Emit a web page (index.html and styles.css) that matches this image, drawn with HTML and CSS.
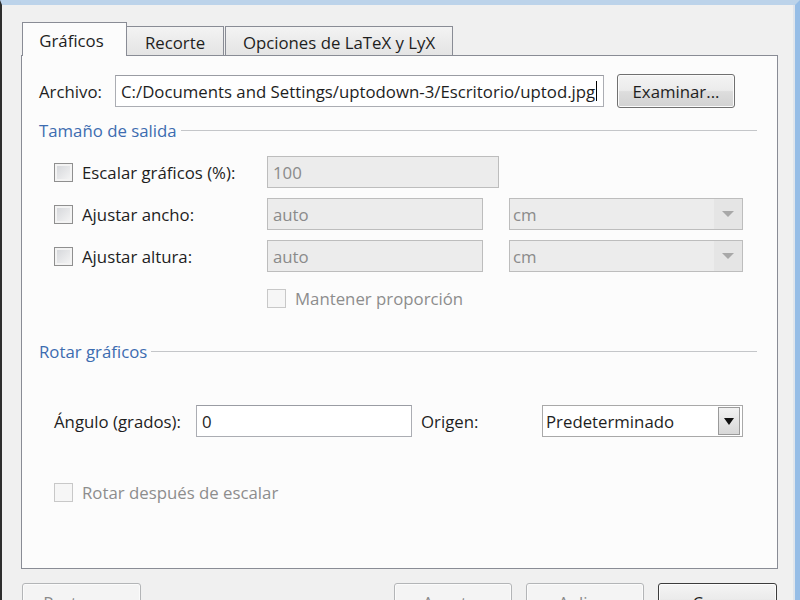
FILE: index.html
```html
<!DOCTYPE html>
<html lang="es">
<head>
  <meta charset="UTF-8">
  <title>Gráficos</title>
  <link rel="stylesheet" href="styles.css">
</head>
<body>
  <div class="window">
    <div class="tabs">
      <div class="tab tab-active">Gráficos</div>
      <div class="tab tab-recorte">Recorte</div>
      <div class="tab tab-opciones">Opciones de LaTeX y LyX</div>
    </div>

    <div class="panel">
      <div class="file-row">
        <span class="file-label">Archivo:</span>
        <div class="field file-field">C:/Documents and Settings/uptodown-3/Escritorio/uptod.jpg<span class="caret"></span></div>
        <button type="button" class="btn btn-browse">Examinar...</button>
      </div>

      <div class="group-title"><span>Tamaño de salida</span></div>
      <div class="size-rows">
        <div class="row">
          <label class="check-label"><span class="check"></span>Escalar gráficos (%):</label>
          <div class="field disabled field-scale">100</div>
        </div>
        <div class="row">
          <label class="check-label"><span class="check"></span>Ajustar ancho:</label>
          <div class="field disabled field-size">auto</div>
          <div class="combo disabled combo-unit">cm<span class="combo-arrow"></span></div>
        </div>
        <div class="row">
          <label class="check-label"><span class="check"></span>Ajustar altura:</label>
          <div class="field disabled field-size">auto</div>
          <div class="combo disabled combo-unit">cm<span class="combo-arrow"></span></div>
        </div>
        <div class="row row-small row-keep">
          <label class="check-label muted"><span class="check check-off"></span>Mantener proporción</label>
        </div>
      </div>

      <div class="group-title group-rotate"><span>Rotar gráficos</span></div>
      <div class="row row-angle">
        <span class="angle-label">Ángulo (grados):</span>
        <div class="field field-angle">0</div>
        <span class="origin-label">Origen:</span>
        <div class="combo combo-origin">Predeterminado<span class="combo-button"></span></div>
      </div>
      <div class="row row-small row-after">
        <label class="check-label muted"><span class="check check-off"></span>Rotar después de escalar</label>
      </div>
    </div>

    <div class="buttons">
      <button type="button" class="btn btn-off">Restaurar</button>
      <span class="spacer"></span>
      <button type="button" class="btn btn-off">Aceptar</button>
      <button type="button" class="btn btn-off">Aplicar</button>
      <button type="button" class="btn btn-default">Cerrar</button>
    </div>
  </div>
</body>
</html>
```

FILE: styles.css
```css
/* Ventana */
body {
  margin: 0;
  font-family: "Open Sans", "Noto Sans", sans-serif;
  font-size: 16.8px;
  color: #1e1e1e;
  background-color: #f0f0f0;
  overflow: hidden;
}
.window {
  box-sizing: border-box;
  width: 800px;
  height: 600px;
  border-top: 5px solid #bcd3ea;
  border-left: 2px solid #2e2e2e;
  border-right: 5px solid #96bde6;
  box-shadow: inset -2px 0 0 #dfe5ec;
  padding: 17px 0 0 19px;
  background-color: #f0f0f0;
}

/* Pestañas */
.tabs {
  display: flex;
  align-items: flex-end;
  height: 34px;
  margin-left: 1px;
  margin-bottom: -1px;
  position: relative;
  z-index: 1;
}
.tab {
  box-sizing: border-box;
  height: 29px;
  margin-bottom: 1px;
  border: 1px solid #898c95;
  border-bottom: none;
  background: linear-gradient(#f3f3f3, #e4e4e4);
  display: flex;
  align-items: center;
  justify-content: center;
  padding-top: 3px;
}
.tab-active {
  width: 105px;
  height: 34px;
  margin-bottom: 0;
  background: #fcfcfc;
  padding-top: 2px;
  padding-right: 6px;
}
.tab-recorte {
  width: 97px;
  border-left: none;
}
.tab-opciones {
  width: 228px;
  margin-left: 1px;
}

/* Panel */
.panel {
  box-sizing: border-box;
  width: 757px;
  height: 514px;
  border: 1px solid #898c95;
  background-color: #fcfcfc;
  padding: 18px 20px 0 17px;
}
.file-row {
  display: flex;
  align-items: center;
  height: 34px;
}
.file-label {
  width: 76px;
}
.field {
  box-sizing: border-box;
  height: 32px;
  border: 1px solid #abadb3;
  border-top-color: #9a9ca3;
  background-color: #fff;
  display: flex;
  align-items: center;
  padding-left: 5px;
  white-space: nowrap;
  overflow: hidden;
}
.file-field {
  width: 489px;
}
.caret {
  display: inline-block;
  width: 1px;
  height: 20px;
  margin-left: 1px;
  background-color: #000;
}
.field.disabled {
  background-color: #ececec;
  border-color: #bdbdbd;
  color: #8a8a8a;
}

/* Botones */
.btn {
  box-sizing: border-box;
  height: 34px;
  border: 1px solid #707070;
  border-radius: 3px;
  background: linear-gradient(#f4f4f4 0%, #ebebeb 48%, #dddddd 52%, #d2d2d2 100%);
  box-shadow: inset 0 0 0 1px #fbfbfb;
  font-family: inherit;
  font-size: 16.8px;
  color: #1e1e1e;
  padding: 0;
}
.btn-browse {
  width: 118px;
  margin-left: 13px;
}
.btn-off {
  width: 118px;
  border-color: #b3b5b7;
  background: #f4f4f4;
  color: #8a8a8a;
}
.btn-off:first-child {
  width: 119px;
}
.btn-default {
  width: 119px;
  border-color: #3c3c3c;
  box-shadow: inset 0 0 0 1px #fdfdfd;
}
.buttons {
  display: flex;
  gap: 14px;
  width: 755px;
  margin-top: 14px;
  padding-left: 1px;
}
.buttons .btn {
  align-self: flex-start;
  padding-top: 4px;
}
.spacer {
  flex: 1;
}

/* Grupos */
.group-title {
  display: flex;
  align-items: center;
  gap: 4px;
  height: 20px;
  margin-top: 12px;
  color: #3d6cb0;
}
.group-title::after {
  content: "";
  flex: 1;
  border-top: 1px solid #c4c6c9;
  margin-top: 1px;
}
.group-rotate {
  margin-top: 33px;
}
.size-rows {
  display: flex;
  flex-direction: column;
  gap: 10px;
  margin-top: 16px;
  padding-left: 15px;
}
.row {
  display: flex;
  align-items: center;
  height: 32px;
}
.row-small {
  height: 20px;
}
.row-keep {
  margin-top: 6px;
  padding-left: 213px;
}
.check-label {
  width: 213px;
  display: flex;
  align-items: center;
  gap: 9px;
  white-space: nowrap;
}
.check {
  box-sizing: border-box;
  width: 19px;
  height: 19px;
  flex: none;
  border: 1px solid #8f8f8f;
  background: linear-gradient(135deg, #d2d4d8, #f7f7f7);
  box-shadow: inset 0 0 0 2px #f3f3f3;
}
.check-off {
  border-color: #c8c8c8;
  background: #f6f6f6;
  box-shadow: none;
}
.muted {
  color: #8d8d8d;
}
.field-scale {
  width: 232px;
}
.field-size {
  width: 216px;
}

/* Listas desplegables */
.combo {
  box-sizing: border-box;
  height: 32px;
  border: 1px solid #a9a9a9;
  background-color: #fff;
  display: flex;
  align-items: center;
  justify-content: space-between;
  padding-left: 3px;
}
.combo.disabled {
  background-color: #ececec;
  border-color: #bdbdbd;
  color: #8a8a8a;
}
.combo-unit {
  width: 234px;
  margin-left: 26px;
}
.combo-arrow {
  align-self: stretch;
  width: 28px;
  background-color: #e5e5e5;
  display: flex;
  align-items: center;
  justify-content: center;
}
.combo-arrow::before {
  content: "";
  border-left: 6px solid transparent;
  border-right: 6px solid transparent;
  border-top: 6px solid #a8a8a8;
}
.combo-origin {
  width: 201px;
  padding-right: 2px;
}
.combo-button {
  box-sizing: border-box;
  width: 22px;
  height: 28px;
  border: 1px solid #9a9a9a;
  background: linear-gradient(#f2f2f2, #d8d8d8);
  display: flex;
  align-items: center;
  justify-content: center;
}
.combo-button::before {
  content: "";
  border-left: 5px solid transparent;
  border-right: 5px solid transparent;
  border-top: 7px solid #111;
}

/* Rotación */
.row-angle {
  margin-top: 44px;
  padding-left: 15px;
}
.angle-label {
  width: 142px;
}
.field-angle {
  width: 216px;
}
.origin-label {
  width: 121px;
  margin-left: 9px;
}
.row-after {
  margin-top: 45px;
  padding-left: 15px;
}
```
